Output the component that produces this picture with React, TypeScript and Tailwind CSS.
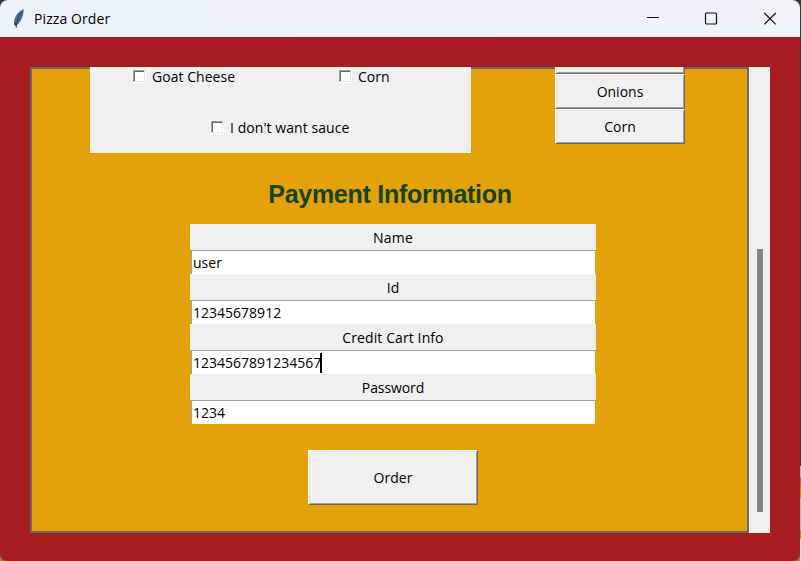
import type { ReactNode } from "react";

const ui = "font-['Open_Sans','Noto_Sans',sans-serif] text-[14px] leading-[20px] whitespace-pre";

function Checkbox({ label, spacing }: { label: string; spacing: string }) {
  return (
    <div className="flex items-center gap-[7px]">
      <span className="mb-[2px] block h-[12px] w-[12px] border border-t-[#a0a0a0] border-l-[#a0a0a0] border-r-[#e3e3e3] border-b-[#e3e3e3] bg-white shadow-[inset_1px_1px_0_#696969,1px_1px_0_#fff]" />
      <span className={spacing}>{label}</span>
    </div>
  );
}

function RaisedButton({ className, children }: { className: string; children?: ReactNode }) {
  return (
    <button
      className={`flex shrink-0 items-center justify-center border border-t-white border-l-white border-r-[#696969] border-b-[#696969] bg-[#f0f0f0] shadow-[inset_1px_1px_0_#e3e3e3,inset_-1px_-1px_0_#a0a0a0] ${className}`}
    >
      {children}
    </button>
  );
}

function Field({ label, value, spacing, focused }: { label: string; value: string; spacing: string; focused?: boolean }) {
  return (
    <div className="flex h-[50px] flex-col">
      <div className="flex h-[26px] items-center justify-center bg-[#f0f0f0] pt-px">
        <span className={spacing}>{label}</span>
      </div>
      <div className="mx-px flex h-[24px] items-center border-t border-l border-[#a0a0a0] bg-white pl-px">
        <span className="tracking-[0.01px]">{value}</span>
        {focused && <span className="-ml-px h-[20px] w-[2px] bg-black" />}
      </div>
    </div>
  );
}

function Feather() {
  return (
    <svg width="12" height="20" viewBox="0 0 12 20">
      <path d="M10.800 .3C7 1.500 2.500 5.500 1.300 11L1 15l1.800 1.800C6.800 14.500 10.300 9 10.800 .3Z" fill="#56697a" />
      <path d="M9.800 1.500C6.500 4 3.800 7.500 2.800 12l-.2 2.800C6.300 12 9.300 7.500 9.800 1.500Z" fill="#3a6ea8" />
      <path d="M8.800 3C5.800 6.500 3.800 10.500 3.200 19" stroke="#26323d" strokeWidth=".8" fill="none" />
      <path d="M1.200 13l.5 3 1.300 1.500 1-2Z" fill="#26323d" />
    </svg>
  );
}

export default function App() {
  return (
    <div className={`flex h-[561px] w-[801px] overflow-hidden bg-[linear-gradient(#38393b_0_466px,#a08a28_466px)] text-black ${ui}`}>
      <div className="flex h-[561px] w-[800px] flex-col overflow-hidden rounded-t-[8px] rounded-b-[7px] bg-[#a61c20]">
        <header className="flex h-[37px] shrink-0 items-center bg-[linear-gradient(90deg,#ecf4f9,#f0f3fa)] pl-[13px]">
          <Feather />
          <span className="ml-[9px] tracking-[0.09px]">Pizza Order</span>
          <svg className="ml-auto mr-[22px]" width="132" height="14" viewBox="0 0 132 14" fill="none" stroke="#111" strokeWidth="1.2">
            <path d="M1 6h12" strokeWidth="1" transform="translate(0 -.5)" />
            <rect x="59.500" y="1" width="11" height="11" rx="1" />
            <path d="M118.300 1l11.400 11.400M129.700 1l-11.400 11.400" />
          </svg>
        </header>

        <main className="flex h-[496px] shrink-0 pt-[30px] pl-[30px]">
          <section className="flex h-[466px] w-[719px] flex-col items-center overflow-hidden bg-[#e3a209] shadow-[inset_0_0_0_2px_#696969]">
            <div className="flex h-[86px] w-full shrink-0 gap-[84px] pl-[60px]">
              <div className="flex h-[86px] w-[381px] shrink-0 flex-col bg-[#f0f0f0]">
                <div className="flex h-[20px]">
                  <div className="w-[206px] pl-[43px]">
                    <Checkbox label="Goat Cheese" spacing="tracking-[0.04px]" />
                  </div>
                  <div className="pl-[43px]">
                    <Checkbox label="Corn" spacing="" />
                  </div>
                </div>
                <div className="mt-[31px] pl-[121px]">
                  <Checkbox label="I don't want sauce" spacing="tracking-[0.06px]" />
                </div>
              </div>
              <div className="flex w-[130px] flex-col">
                <div className="flex h-[7px] shrink-0 flex-col justify-end overflow-hidden">
                  <RaisedButton className="h-[35px]" />
                </div>
                <RaisedButton className="h-[35px]">Onions</RaisedButton>
                <RaisedButton className="h-[35px]">Corn</RaisedButton>
              </div>
            </div>

            <h1 className="mt-[25px] h-[32px] shrink-0 pl-px font-['Liberation_Sans',Arial,sans-serif] text-[25px] leading-[32px] font-bold tracking-[-0.27px] text-[#17431b]">
              Payment Information
            </h1>

            <form className="mt-[14px] ml-[7px] flex w-[406px] shrink-0 flex-col">
              <Field label="Name" value="user" spacing="tracking-[0.2px]" />
              <Field label="Id" value="12345678912" spacing="" />
              <Field label="Credit Cart Info" value="1234567891234567" spacing="tracking-[0.1px]" focused />
              <Field label="Password" value="1234" spacing="tracking-[-0.1px]" />
            </form>

            <RaisedButton className="mt-[26px] ml-[7px] h-[55px] w-[170px]">Order</RaisedButton>
          </section>

          <aside className="flex h-[466px] w-[21px] border-l border-white bg-[#f0f0f0] pt-[182px] pl-[7px]">
            <div className="h-[263px] w-[6px] bg-[#858585]" />
          </aside>
        </main>
      </div>
      <div className="flex w-px flex-col pt-[466px]">
        <div className="h-[11px] bg-[#b8b8b8]" />
        <div className="h-[9px] bg-[#a96b6e]" />
        <div className="h-[12px] bg-[#b39128]" />
        <div className="h-[32px] bg-[#b8b8b8]" />
        <div className="h-[9px] bg-[#b39128]" />
        <div className="h-[22px] bg-[#e0e0e0]" />
      </div>
    </div>
  );
}
